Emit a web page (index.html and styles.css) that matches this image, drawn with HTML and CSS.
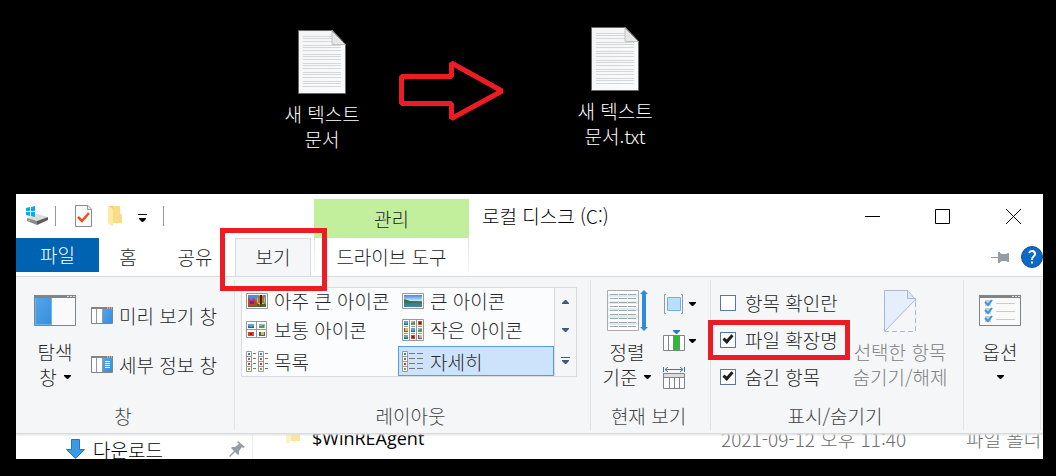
FILE: index.html
```html
<!DOCTYPE html>
<html lang="ko">
<head>
<meta charset="utf-8">
<meta name="viewport" content="width=device-width, initial-scale=1">
<title>로컬 디스크 (C:)</title>
<link rel="stylesheet" href="styles.css">
</head>
<body>
<svg class="defs" aria-hidden="true">
  <defs>
    <linearGradient id="paper" x1="0" y1="0" x2="1" y2="1"><stop offset="0" stop-color="#f4f4f4"/><stop offset="1" stop-color="#fbfcfe"/></linearGradient>
    <linearGradient id="sky" x1="0" y1="0" x2="0" y2="1"><stop offset="0" stop-color="#3f86e0"/><stop offset=".5" stop-color="#cfeaf8"/><stop offset=".55" stop-color="#47785c"/><stop offset="1" stop-color="#3b87b5"/></linearGradient>
    <linearGradient id="blue" x1="0" y1="0" x2="1" y2="1"><stop offset="0" stop-color="#55a5e8"/><stop offset="1" stop-color="#358fdc"/></linearGradient>
    <g id="t-a"><rect width="6" height="4" fill="#58a5dc"/><path d="M0 4V2l3 1 3-1v2z" fill="#27704f"/></g>
    <g id="t-b"><rect width="6" height="4" fill="#83b6cf"/><path d="M0 4V2h3V1h2v3z" fill="#62953c"/></g>
    <g id="t-c"><rect width="6" height="4" fill="#d34a18"/><path d="M2 1h2v2H2z" fill="#8d1919"/></g>
    <g id="t-d"><rect width="6" height="4" fill="#3261bd"/><path d="M2 0h3v3H2z" fill="#e2bd2c"/></g>
    <g id="list-col"><path d="M.5.5h5v20h-5zM.5 5.5h5M.5 10.5h5M.5 15.5h5" fill="#fff" stroke="#999"/><path d="M2 2h2v2H2z" fill="#397fae"/><path d="M2 7h2v2H2z" fill="#8b7038"/><path d="M2 12h2v2H2z" fill="#cd3524"/><path d="M2 17h2v2H2z" fill="#67a94f"/></g>
    <symbol id="doc" viewBox="0 0 48 64">
      <path d="M.5.5H34L47.500 14.500V63.500H.5z" fill="url(#paper)" stroke="#686868"/>
      <path d="M5 6.500h29M5 8.500h29M5 11.500h29M5 15.500h38M5 17.500h38M5 20.500h38M5 24.500h38M5 26.500h38M5 29.500h38M5 33.500h38M5 35.500h38M5 38.500h38M5 42.500h38M5 44.500h38M5 47.500h38M5 51.500h38M5 53.500h38M5 56.500h38" stroke="#d5d7da"/>
      <path d="M34 .5V14.500H47.500z" fill="#e6e6e6" stroke="#c2c2c2"/>
      <path d="M34 .5 47.500 14.500" stroke="#777"/>
    </symbol>
    <symbol id="caret" viewBox="0 0 7 4"><path d="M0 0h7v1L4 4H3L0 1z"/></symbol>
  </defs>
</svg>

<main class="desktop">
  <figure class="file file-plain"><svg class="file-icon"><use href="#doc"/></svg><figcaption>새 텍스트<br>문서</figcaption></figure>
  <svg class="arrow" viewBox="0 0 106 62" aria-hidden="true"><path d="M2.500 16.500H52.500V3L103 31 52.500 58.500V43.500H2.500z" fill="none" stroke="#ed1c24" stroke-width="5" stroke-linejoin="bevel"/></svg>
  <figure class="file file-ext"><svg class="file-icon"><use href="#doc"/></svg><figcaption>새 텍스트<br>문서.txt</figcaption></figure>
</main>

<section class="window">
  <header class="titlebar">
    <div class="quick">
      <svg class="i-drive" width="23" height="20" viewBox="0 0 23 20"><path d="M1 12 11 8 22 11 11 15z" fill="#dcdcdc"/><path d="M1 12 11 15V19L1 15z" fill="#8a8a8a"/><path d="M11 15 22 11V14L11 19z" fill="#5c5c5c"/><path d="M0 2l4-1v4H0zM5 1l4-1v5H5zM0 6h4v4L0 9zM5 6h4v5l-4-1z" fill="#00adef"/><path d="M2 14h2v1H2z" fill="#9fd858"/></svg>
      <span class="sep sep-one"></span>
      <button class="plain q-doc" aria-label="속성"><svg width="18" height="22" viewBox="0 0 18 22"><path d="M.5.5H13L16.500 4V21.500H.5z" fill="#fafafa" stroke="#8c8c8c"/><path d="M12.500.5V4.500h4" fill="#e5e5e5" stroke="#999"/><path d="M3 12l4 4L14 8" fill="none" stroke="#f0501a" stroke-width="2.500"/></svg></button>
      <button class="plain q-folder" aria-label="새 폴더"><svg width="14" height="22" viewBox="0 0 14 22"><path d="M0 1h12v8h2v9H0z" fill="#f5ce6c"/><path d="M0 1h1l4 3v16l-1 1-4-3z" fill="#ffe9a5"/><path d="M5 1h7v8h2v9H5V4z" fill="#fbdc85"/></svg></button>
      <button class="plain q-more" aria-label="사용자 지정"><svg width="9" height="8" viewBox="0 0 9 8"><path d="M0 0h9v1H0zM1 4h7v1L5 8H4L1 5z"/></svg></button>
      <span class="sep"></span>
    </div>
    <div class="context">관리</div>
    <h1 class="title">로컬 디스크 (C:)</h1>
    <div class="controls">
      <button class="plain" aria-label="최소화"><svg width="15" height="15" viewBox="0 0 15 15"><path d="M0 7.500h15" stroke="#000"/></svg></button>
      <button class="plain" aria-label="최대화"><svg width="15" height="15" viewBox="0 0 15 15"><path d="M.5.5h14v14H.5z" fill="none" stroke="#000"/></svg></button>
      <button class="plain" aria-label="닫기"><svg width="15" height="15" viewBox="0 0 15 15"><path d="M0 0 15 15M15 0 0 15" stroke="#000"/></svg></button>
    </div>
  </header>

  <nav class="tabs">
    <button class="plain tab tab-file">파일</button>
    <button class="plain tab tab-home">홈</button>
    <button class="plain tab tab-share">공유</button>
    <button class="plain tab tab-view">보기<span class="mark mark-tab"></span></button>
    <button class="plain tab tab-drive">드라이브 도구</button>
    <div class="tab-tools">
      <button class="plain" aria-label="리본 고정"><svg width="18" height="11" viewBox="0 0 18 11"><path d="M0 5.500h8" stroke="#949da4"/><path d="M7 0h2v1l2 1h4l2-1h1v9h-1l-2-1h-4l-2 1v1H7z" fill="#949da4"/></svg></button>
      <button class="plain" aria-label="도움말"><svg width="22" height="22" viewBox="0 0 22 22"><circle cx="11" cy="11" r="10.500" fill="#0b6bc6" stroke="#174f83"/><path d="M8 7q1-2 3-2 3 0 3 3 0 1.500-1.500 2.500T11 14M11 15.500v2" fill="none" stroke="#fff" stroke-width="2"/></svg></button>
    </div>
  </nav>

  <div class="ribbon">
    <section class="group g-pane">
      <div class="group-body">
        <button class="plain big"><svg width="42" height="31" viewBox="0 0 42 31"><path d="M.5.5h41v30H.5z" fill="#fafafa" stroke="#808487"/><path d="M0 0h42v3H0z" fill="#808487"/><path d="M33 1h2v1h-2zM36 1h2v1h-2zM39 1h2v1h-2z" fill="#ddd"/><path d="M1 3h17v27H1z" fill="url(#blue)"/><path d="M17.500 3v27M1.500 3v27M1 29.500h17" stroke="#69b4ee"/></svg><span class="big-text">탐색<br>창<svg class="caret"><use href="#caret"/></svg></span></button>
        <div class="pane-list">
          <button class="plain small"><svg width="22" height="17" viewBox="0 0 22 17"><path d="M.5.5h21v16H.5z" fill="#fff" stroke="#808487"/><path d="M0 0h22v2H0z" fill="#808487"/><path d="M16 1h1M18 1h1M20 1h1" stroke="#ddd"/><path d="M5.500 2v14M11.500 2v14" stroke="#999"/><path d="M12 2h9v14h-9z" fill="url(#blue)"/></svg>미리 보기 창</button>
          <button class="plain small"><svg width="22" height="17" viewBox="0 0 22 17"><path d="M.5.5h21v16H.5z" fill="#fff" stroke="#808487"/><path d="M0 0h22v2H0z" fill="#808487"/><path d="M16 1h1M18 1h1M20 1h1" stroke="#ddd"/><path d="M5.500 2v14M11.500 2v14" stroke="#999"/><path d="M12 2h9v14h-9z" fill="url(#blue)"/><path d="M14 5.500h5M14 7.500h5M14 9.500h5M14 11.500h5" stroke="#fff"/></svg>세부 정보 창</button>
        </div>
      </div>
      <h2 class="group-name">창</h2>
    </section>

    <section class="group g-layout">
      <div class="group-body">
        <div class="gallery">
          <div class="views">
            <button class="plain view"><svg width="22" height="16" viewBox="0 0 22 16"><path d="M.5.500h21v15H.5z" fill="#fff" stroke="#999"/><path d="M2 2h18v12H2z" fill="#4a8ce8"/><path d="M2 11h18v3H2z" fill="#36742b"/><path d="M2 4l3 3 3-2 3 4v4H2z" fill="#d8382c"/><path d="M4 8h4v3H4z" fill="#5330a6"/><ellipse cx="15" cy="7" rx="4" ry="5" fill="#f7bd17"/><path d="M13 3v7M17 3v7" stroke="#8b281b"/><path d="M14 2h2v9h-2z" fill="#312723"/><path d="M14 11h3v3h-3z" fill="#704323"/></svg>아주 큰 아이콘</button>
            <button class="plain view"><svg width="22" height="16" viewBox="0 0 22 16"><path d="M.5.500h21v15H.5z" fill="#fff" stroke="#999"/><path d="M2 2h18v12H2z" fill="url(#sky)"/><path d="M2 6l6 2 12 1v1H2z" fill="#34714d"/></svg>큰 아이콘</button>
            <button class="plain view"><svg width="22" height="18" viewBox="0 0 22 18"><path d="M.5.500h20v16H.5zM10.500.5v16M.5 8.500h20" fill="#fff" stroke="#999"/><use href="#t-a" x="2" y="3"/><use href="#t-b" x="13" y="3"/><use href="#t-c" x="2" y="11"/><use href="#t-d" x="13" y="11"/></svg>보통 아이콘</button>
            <button class="plain view"><svg width="22" height="22" viewBox="0 0 22 22"><path d="M.5.500h21v21H.5zM7.500.5v21M14.500.5v21M.5 7.500h21M.5 14.500h21" fill="#fff" stroke="#999"/><use href="#t-a" x="1" y="2"/><use href="#t-b" x="8" y="2"/><use href="#t-c" x="15" y="2"/><use href="#t-d" x="1" y="9"/><use href="#t-a" x="8" y="9"/><use href="#t-b" x="15" y="9"/><use href="#t-a" x="1" y="16"/><use href="#t-c" x="8" y="16"/><use href="#t-d" x="15" y="16"/><path d="M1.500 1v20M6.500 1v20M8.500 1v20M13.500 1v20M15.500 1v20M20.500 1v20" stroke="#fff"/></svg>작은 아이콘</button>
            <button class="plain view"><svg width="22" height="21" viewBox="0 0 22 21"><use href="#list-col"/><use href="#list-col" x="12"/><path d="M7 2.500h3M7 7.500h3M7 12.500h3M7 17.500h3M19 2.500h3M19 7.500h3M19 12.500h3M19 17.500h3" stroke="#777"/></svg>목록</button>
            <button class="plain view view-on" aria-pressed="true"><svg width="22" height="21" viewBox="0 0 22 21"><use href="#list-col"/><path d="M7 2.500h6M7 7.500h6M7 12.500h6M7 17.500h6M15 2.500h6M15 7.500h6M15 12.500h6M15 17.500h6" stroke="#777"/></svg>자세히</button>
          </div>
          <div class="scroller">
            <button class="plain" aria-label="위로"><svg width="7" height="4" viewBox="0 0 7 4"><path d="M0 4h7V3L4 0H3L0 3z" fill="#41577c"/></svg></button>
            <button class="plain" aria-label="아래로"><svg width="7" height="4" viewBox="0 0 7 4"><path d="M0 0h7v1L4 4H3L0 1z" fill="#41577c"/></svg></button>
            <button class="plain" aria-label="자세히 보기"><svg width="9" height="7" viewBox="0 0 9 7"><path d="M0 0h9v1H0zM1 3h7v1L5 7H4L1 4z" fill="#41577c"/></svg></button>
          </div>
        </div>
      </div>
      <h2 class="group-name">레이아웃</h2>
    </section>

    <section class="group g-current">
      <div class="group-body">
        <button class="plain big big-sort"><svg width="41" height="41" viewBox="0 0 41 41"><path d="M.5.500h31v40H.5z" fill="#fff" stroke="#aaa"/><path d="M1 4h30v3H1zM1 11h30v3H1zM1 18h30v3H1zM1 25h30v3H1zM1 32h30v3H1z" fill="#d8edf8"/><path d="M3 4.500h26M3 8.500h26M3 12.500h26M3 16.500h26M3 20.500h26M3 24.500h26M3 28.500h26M3 32.500h26M3 36.500h26" stroke="#a6a6a6" stroke-dasharray="8 1"/><path d="M33 4l4-4 4 4h-2v33h2l-4 4-4-4h2V4z" fill="#2f8bd8"/></svg><span class="big-text">정렬<br>기준<svg class="caret"><use href="#caret"/></svg></span></button>
        <div class="tools">
          <button class="plain tool" aria-label="분류 방법"><svg width="22" height="20" viewBox="0 0 22 20"><path d="M3 .5H1.500v19H3M18 .5h1.500v19H18" fill="none" stroke="#999"/><path d="M4.500 3.500h13v13h-13z" fill="#b9dfff" stroke="#69b5e8"/></svg><svg class="caret"><use href="#caret"/></svg></button>
          <button class="plain tool" aria-label="열 추가"><svg width="22" height="21" viewBox="0 0 22 21"><path d="M10 0h7v1l-3 3h-1l-3-3z" fill="#2a7dc0"/><path d="M.5 5.500h21v15H.5zM5.500 5v15M10.500 5v15M16.500 5v15" fill="#fff" stroke="#808487"/><path d="M11 6h5v14h-5z" fill="#21c22c"/></svg><svg class="caret"><use href="#caret"/></svg></button>
          <button class="plain tool" aria-label="모든 열 너비 조정"><svg width="22" height="22" viewBox="0 0 22 22"><path d="M.5 0v5M21.500 0v5M2 2.500h18M5 0 2 2.500 5 5M17 0l3 2.500L17 5" fill="none" stroke="#2a7dc0"/><path d="M.5 6.500h21v15H.5zM6.500 11v10M11.500 11v10M16.500 11v10" fill="#fff" stroke="#808487"/><path d="M1 7h20v3H1z" fill="#ddd"/><path d="M1 10.500h20" stroke="#808487"/></svg></button>
        </div>
      </div>
      <h2 class="group-name">현재 보기</h2>
    </section>

    <section class="group g-show">
      <div class="group-body">
        <div class="checks">
          <label class="check"><input type="checkbox">항목 확인란</label>
          <label class="check"><input type="checkbox" checked>파일 확장명<span class="mark mark-check"></span></label>
          <label class="check"><input type="checkbox" checked>숨긴 항목</label>
        </div>
        <button class="plain big big-hide" disabled><svg width="33" height="42" viewBox="0 0 33 42"><path d="M.5.500h23l8 9L.5 41.500z" fill="#e5effb" stroke="#aab8d2"/><path d="M23.500.5v8h8v3" fill="#dce8f8" stroke="#aab8d2"/><path d="M31.500 12v29.500H1" fill="none" stroke="#aab8d2" stroke-dasharray="5 3"/></svg><span class="big-text">선택한 항목<br>숨기기/해제</span></button>
      </div>
      <h2 class="group-name">표시/숨기기</h2>
    </section>

    <section class="group g-options">
      <div class="group-body">
        <button class="plain big"><svg width="42" height="31" viewBox="0 0 42 31"><path d="M.5.500h41v30H.5z" fill="#fafafa" stroke="#808487"/><path d="M0 0h42v3H0z" fill="#808487"/><path d="M33 1h2v1h-2zM36 1h2v1h-2zM39 1h2v1h-2z" fill="#ddd"/><path d="M6 5h6v6H6zM6 13h6v6H6zM6 21h6v6H6z" fill="#ccc"/><path d="M6 7l3 3 4-5M6 15l3 3 4-5M6 23l3 3 4-5" fill="none" stroke="#3398e8" stroke-width="2"/><path d="M17 8.500h19M17 16.500h19M17 24.500h19" stroke="#ccc"/></svg><span class="big-text">옵션<br><svg class="caret"><use href="#caret"/></svg></span></button>
      </div>
    </section>
  </div>

  <div class="content">
    <aside class="tree">
      <svg width="19" height="20" viewBox="0 0 19 20"><path d="M5.500.5h8v10h5L9.500 19.500.5 10.500h5z" fill="#3a9aea" stroke="#2576b6"/></svg>
      <a class="tree-link" href="#downloads">다운로드</a>
      <svg class="pin" width="16" height="16" viewBox="0 0 16 16"><path d="M9 0l7 6-2 1-1-1-3 4v3l-1 1-3-3-5 5-1-1 5-5-3-3 1-1h3l4-3-2-2z" fill="#949da4"/></svg>
    </aside>
    <table class="files">
      <tbody>
        <tr><td class="c-icon"><svg width="14" height="18" viewBox="0 0 14 18"><path d="M0 0h14v15H5l-5 3z" fill="#fff0c0"/><path d="M5 4h9v11H5z" fill="#fbe3a0"/></svg></td><td class="c-name">$WinREAgent</td><td class="c-date">2021-09-12 오후 11:40</td><td class="c-type">파일 폴더</td></tr>
        <tr><td class="c-icon c-next"><svg width="14" height="18" viewBox="0 0 14 18"><path d="M0 0h13v18H0z" fill="#f5ce6c"/><path d="M0 0l5 3v15H0z" fill="#ffe9a5"/></svg></td><td></td><td></td><td></td></tr>
      </tbody>
    </table>
  </div>
</section>
</body>
</html>
```
FILE: styles.css
```css
* { box-sizing: border-box; }
body {
  margin: 0;
  padding: 0 13px 17px 16px;
  background: #000;
  color: #262626;
  font: 300 19px/25px "Noto Sans CJK KR", sans-serif;
}
svg { display: block; flex: none; }
.defs { position: absolute; width: 0; height: 0; }
.plain {
  margin: 0;
  padding: 0;
  border: 0;
  background: none;
  color: inherit;
  font: inherit;
}

.desktop {
  display: flex;
  align-items: flex-start;
  min-height: 194px;
  padding: 27px 0 0 256px;
  color: #fff;
}
.file {
  display: flex;
  flex-direction: column;
  align-items: center;
  gap: 7px;
  width: 100px;
  margin: 0;
  text-align: center;
}
.file-plain { margin-top: 3px; }
.file-icon { width: 48px; height: 64px; }
.arrow { width: 106px; height: 62px; margin: 33px 60px 0 27px; }

.window { background: #fff; overflow: hidden; }
.titlebar { display: flex; height: 44px; }
.quick {
  display: flex;
  align-items: center;
  width: 298px;
  padding-left: 10px;
}
.sep { width: 1px; height: 20px; background: #999; }
.sep-one { margin-left: 6px; }
.q-doc { margin-left: 19px; }
.q-folder { margin-left: 15px; }
.q-more { margin: 3px 16px 0; }
.context {
  width: 155px;
  margin-top: 5px;
  background: #c1ef9b;
  line-height: 39px;
  text-align: center;
}
.title {
  flex: 1;
  margin: 0;
  padding-left: 13px;
  color: #000;
  font: inherit;
  line-height: 44px;
}
.controls { display: flex; }
.controls .plain {
  display: flex;
  align-items: center;
  justify-content: center;
  width: 70px;
}
.controls .plain:last-child { width: 66px; padding-left: 6px; }

.tabs { display: flex; height: 38px; }
.tab { height: 38px; padding-bottom: 2px; }
.tab-file {
  width: 83px;
  height: 34px;
  background: #0063b1;
  color: #fff;
}
.tab-home { width: 58px; }
.tab-share { width: 76px; }
.tab-view {
  position: relative;
  width: 76px;
  margin: 0 3px 0 2px;
  border: 1px solid #dadbdc;
  border-bottom: 0;
  background: #f5f6f7;
}
.tab-drive {
  width: 155px;
  border: 1px solid;
  border-width: 0 1px;
  border-image: linear-gradient(#ddd, #fff) 1;
}
.tab-tools {
  display: flex;
  flex: 1;
  align-items: center;
  justify-content: flex-end;
  gap: 12px;
}
.mark {
  position: absolute;
  z-index: 2;
  border: 5px solid #ed1c24;
  pointer-events: none;
}
.mark-tab { inset: -11px -17px -15px -16px; }
.mark-check { inset: -7px -8px -8px -12px; }

.ribbon {
  display: flex;
  position: relative;
  min-height: 158px;
  padding: 3px 2px 3px 0;
  border: 1px solid #dadbdc;
  border-width: 1px 0;
  background: #f5f6f7;
  box-shadow: 0 1px 2px #ddd;
}
.group {
  display: flex;
  flex-direction: column;
  border-right: 1px solid #e2e3e4;
}
.group-body { display: flex; flex: 1; }
.group-name {
  margin: 0;
  padding: 0 4px 2px 0;
  color: #444;
  font: inherit;
  text-align: center;
}
.g-pane { width: 219px; }
.g-layout { flex: 1; }
.g-current { width: 120px; }
.g-show { width: 253px; }
.g-options { width: 77px; }

.big {
  display: flex;
  flex-direction: column;
  align-items: center;
  gap: 13px;
  width: 78px;
  padding-top: 15px;
}
.big-text { display: block; white-space: nowrap; }
.caret {
  display: inline-block;
  width: 7px;
  height: 4px;
  margin-left: 7px;
  vertical-align: 6px;
}
.g-options .big { width: 72px; }
.g-options .caret { margin-left: 0; }
.pane-list { display: grid; align-content: start; gap: 24px; padding-top: 23px; }
.small { display: flex; align-items: center; gap: 6px; white-space: nowrap; margin-left: -3px; }

.gallery {
  display: flex;
  flex: 1;
  height: 90px;
  margin: 7px 13px 0 6px;
  border: 1px solid #dadbdc;
  background: #fbfcfe;
}
.views { display: grid; flex: 1; grid-template: 25px 33px 30px / 1fr 1fr; }
.view {
  display: flex;
  align-items: center;
  gap: 6px;
  padding-left: 4px;
  white-space: nowrap;
}
.view-on {
  border: 1px solid #569de5;
  background: #cde3fb;
  padding-left: 3px;
}
.scroller {
  display: grid;
  width: 22px;
  border-left: 1px solid #dadbdc;
  background: #f5f6f7;
}
.scroller .plain { display: grid; place-items: center; }

.big-sort { width: 72px; gap: 8px; padding: 10px 0 0; }
.tools { display: flex; flex-direction: column; padding-top: 14px; gap: 16px; }
.tool { display: flex; align-items: center; min-height: 20px; }
.tool .caret { margin-left: 4px; }

.checks { display: grid; align-content: start; gap: 12px; padding: 10px 0 0 9px; }
.check {
  position: relative;
  display: flex;
  align-items: center;
  gap: 9px;
  width: 122px;
  white-space: nowrap;
}
.check input {
  appearance: none;
  flex: none;
  width: 16px;
  height: 16px;
  margin: 0;
  border: 1px solid #5878a4;
  background: #fff;
}
.check input:checked::before {
  content: "";
  display: block;
  box-sizing: content-box;
  width: 3px;
  height: 7px;
  margin: 0 auto;
  border: solid #1e1e1e;
  border-width: 0 3px 3px 0;
  transform: rotate(42deg);
}
.big-hide { width: 116px; gap: 7px; padding: 10px 0 0; color: #808080; }

.content { display: flex; height: 25px; overflow: hidden; }
.tree {
  display: flex;
  align-items: flex-start;
  width: 237px;
  padding: 5px 7px 0 50px;
  border-right: 1px solid #eee;
}
.tree-link {
  flex: 1;
  margin-top: -2px;
  padding-left: 8px;
  color: #000;
  text-decoration: none;
}
.pin { margin-top: 2px; }
.files {
  flex: 1;
  height: 60px;
  margin-top: -8px;
  border-collapse: collapse;
  table-layout: fixed;
  color: #6d6d6d;
}
.files td { padding: 0; vertical-align: top; white-space: nowrap; overflow: hidden; }
.files .c-icon { width: 59px; }
.c-icon svg { margin-left: 33px; }
.files .c-name { color: #000; font: 400 18px/25px "Open Sans", sans-serif; }
.c-date { width: 245px; }
.c-type { width: 77px; }
.files .c-next { padding-top: 4px; }
```
